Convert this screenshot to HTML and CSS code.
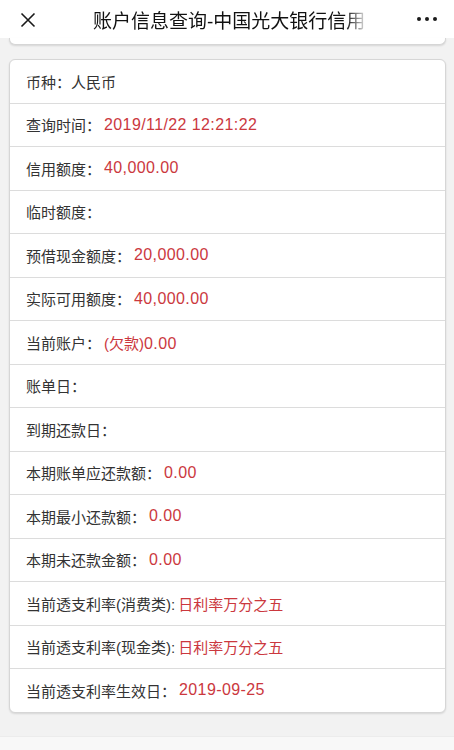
FILE: index.html
```html
<!DOCTYPE html>
<html lang="zh-CN">
<head>
    <meta charset="UTF-8">
    <meta name="viewport" content="width=device-width, initial-scale=1.0">
    <title>账户信息查询</title>
    <link rel="stylesheet" href="styles.css">
</head>
<body>
    <header class="topbar">
        <svg class="close" width="16" height="16" viewBox="0 0 16 16">
            <path d="M1.5 1.5 L14.5 14.5 M14.5 1.5 L1.5 14.5" stroke="#1a1a1a" stroke-width="1.6" fill="none"/>
        </svg>
        <h1 class="title">账户信息查询-中国光大银行信用</h1>
        <svg class="more" width="22" height="6" viewBox="0 0 22 6">
            <circle cx="3" cy="3" r="2" fill="#1a1a1a"/>
            <circle cx="11" cy="3" r="2" fill="#1a1a1a"/>
            <circle cx="19" cy="3" r="2" fill="#1a1a1a"/>
        </svg>
    </header>

    <main class="content">
        <div class="card card-stub"></div>

        <div class="card">
            <div class="row">币种：人民币</div>
            <div class="row">查询时间：<span class="val num">2019/11/22 12:21:22</span></div>
            <div class="row">信用额度：<span class="val num">40,000.00</span></div>
            <div class="row">临时额度：</div>
            <div class="row">预借现金额度：<span class="val num">20,000.00</span></div>
            <div class="row">实际可用额度：<span class="val num">40,000.00</span></div>
            <div class="row">当前账户：<span class="val">(欠款)<span class="num">0.00</span></span></div>
            <div class="row">账单日：</div>
            <div class="row">到期还款日：</div>
            <div class="row">本期账单应还款额：<span class="val num">0.00</span></div>
            <div class="row">本期最小还款额：<span class="val num">0.00</span></div>
            <div class="row">本期未还款金额：<span class="val num">0.00</span></div>
            <div class="row">当前透支利率(消费类):<span class="val">日利率万分之五</span></div>
            <div class="row">当前透支利率(现金类):<span class="val">日利率万分之五</span></div>
            <div class="row">当前透支利率生效日：<span class="val num">2019-09-25</span></div>
        </div>
    </main>

    <footer class="bottombar"></footer>
</body>
</html>
```

FILE: styles.css
```css
body {
    margin: 0;
    padding: 0;
    background-color: #f2f2f2;
    font-family: "Liberation Sans", "Noto Sans CJK SC", sans-serif;
    color: #333;
}
.topbar {
    height: 38px;
    background-color: #fff;
    display: flex;
    align-items: center;
    padding: 0 16px 0 20px;
}
.close {
    flex: none;
    margin-top: 2px;
}
.title {
    flex: none;
    margin: 0 0 0 57px;
    font-size: 19px;
    font-weight: normal;
    color: #111;
    white-space: nowrap;
    -webkit-mask-image: linear-gradient(to right, #000 93%, rgba(0, 0, 0, 0.15) 100%);
    mask-image: linear-gradient(to right, #000 93%, rgba(0, 0, 0, 0.15) 100%);
}
.more {
    flex: none;
    margin-left: auto;
}
.content {
    padding: 0 8px 0 9px;
}
.card {
    background-color: #fff;
    border: 1px solid #d6d6d6;
    border-radius: 6px;
    box-shadow: 0 1px 2px rgba(0, 0, 0, 0.12);
}
.card-stub {
    height: 6px;
    border-top: none;
    border-radius: 0 0 6px 6px;
    margin-bottom: 14px;
}
.row {
    height: 42.5px;
    display: flex;
    align-items: center;
    padding: 0 16px;
    font-size: 15px;
    white-space: nowrap;
    border-top: 1px solid #dcdcdc;
}
.row:first-child {
    border-top: none;
}
.val {
    margin-left: 3px;
    color: #cb383e;
}
.num {
    font-size: 16px;
    letter-spacing: 0.4px;
}
.bottombar {
    margin-top: 23px;
    height: 20px;
    background-color: #f8f8f8;
    border-top: 1px solid #ececec;
}
```
